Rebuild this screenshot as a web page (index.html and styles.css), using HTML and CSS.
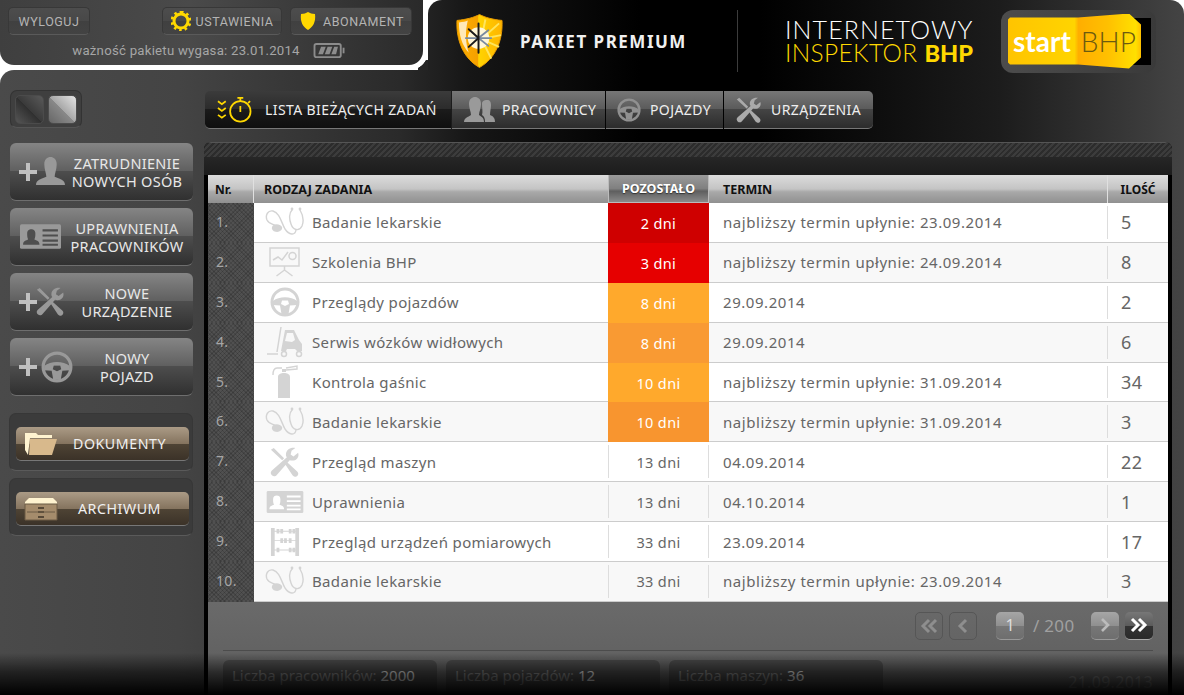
FILE: index.html
```html
<!DOCTYPE html>
<html lang="pl">
<head>
<meta charset="utf-8">
<title>Internetowy Inspektor BHP</title>
<link rel="stylesheet" href="styles.css">
</head>
<body>
<svg class="defs" xmlns="http://www.w3.org/2000/svg">
  <symbol id="i-steth" viewBox="0 0 40 30">
    <g fill="none" stroke="currentColor" stroke-width="1.4" stroke-linecap="round">
      <path d="M27 3C24 6 24 12 26 17C28 23 34 25 37 19C39 14 38 8 35 3"/>
      <path d="M31 23C30 29 24 28 20 22C16 15 15 6 8 4C3 3 0 8 2 13C4 17 8 17 11 19"/>
    </g>
    <circle cx="27" cy="2" r="1.4" fill="currentColor"/><circle cx="35" cy="2" r="1.4" fill="currentColor"/>
    <path d="M7 20a5 3.500 0 0 1 10 2a4 3 0 0 1-10-2z" fill="currentColor"/>
  </symbol>
  <symbol id="i-board" viewBox="0 0 40 30">
    <g fill="none" stroke="currentColor" stroke-width="1.5">
      <rect x="5" y="1" width="29" height="18"/>
      <path d="M8 13l5-3 4 3 6-8"/>
      <circle cx="27.500" cy="9" r="3.500"/>
      <path d="M19.500 19v4M19.500 23l-8 6M19.500 23l8 6"/>
    </g>
  </symbol>
  <symbol id="i-wheel" viewBox="0 0 30 30">
    <circle cx="15" cy="15" r="13" fill="none" stroke="currentColor" stroke-width="3"/>
    <path fill-rule="evenodd" fill="currentColor" d="M3 14C9 9 21 9 27 14L27 18L20 18.500L18.500 27L11.500 27L10 18.500L3 18ZM12 13.500L18 13.500L19 17L15 19L11 17Z"/>
  </symbol>
  <symbol id="i-fork" viewBox="0 0 38 32">
    <g fill="none" stroke="currentColor" stroke-width="1.5">
      <path d="M15 1L11 26M1 28H12"/>
      <circle cx="18" cy="28" r="2.500"/><circle cx="33" cy="28" r="2.500"/>
    </g>
    <path fill="currentColor" d="M19 4H28L33 14L36 18V25H31L29 23H21L20 25H15ZM21 7L19 15L26 16L29 14L27 7Z" fill-rule="evenodd"/>
  </symbol>
  <symbol id="i-ext" viewBox="0 0 30 34">
    <path fill="currentColor" d="M8 12C8 9 11 8 14 8C17 8 20 9 20 12V33H8ZM12 4H16V7H12Z"/>
    <path fill="none" stroke="currentColor" stroke-width="1.4" d="M12 3H7C4 3 3 6 3 10M16 3L27 1V4L16 5"/>
  </symbol>
  <symbol id="i-tools" viewBox="0 0 32 32">
    <path fill="currentColor" d="M30 6L25 10L22 8L23 4L27 1C22 0 17 3 17 8C17 9 17 10 18 11L2 25C0 27 1 29 2 30C4 32 6 31 7 30L21 14C26 16 32 12 30 6Z"/>
    <path fill="currentColor" d="M1 3L4 1L15 12L13 14ZM16 18L18 16L29 26C31 28 30 30 29 31C28 32 26 32 24 30Z"/>
  </symbol>
  <symbol id="i-card" viewBox="0 0 40 24">
    <rect width="40" height="24" rx="1.500" fill="currentColor"/>
    <path fill="var(--cut,#fff)" d="M3 20C3 16 6 16 8 15C7 13 7 11 7 9C7 6 9 5 11 5C13 5 15 6 15 9C15 11 15 13 14 15C16 16 19 16 19 20ZM22 5H37V7H22ZM22 10H37V12H22ZM22 15H37V17H22ZM22 19H37V21H22Z"/>
  </symbol>
  <symbol id="i-abacus" viewBox="0 0 32 32">
    <path fill="currentColor" d="M1 1H5V31H1ZM27 1H31V31H27ZM5 4H27V5H5ZM5 14H27V15H5ZM5 24H27V25H5Z"/>
    <path fill="currentColor" d="M7 2h3v5H7zM11 2h3v5h-3zM20 2h3v5h-3zM24 2h3v5h-3zM11 12h3v5h-3zM15 12h3v5h-3zM20 12h3v5h-3zM7 22h3v5H7zM20 22h3v5h-3zM24 22h3v5h-3z"/>
  </symbol>
  <symbol id="i-person" viewBox="0 0 28 28">
    <path fill="currentColor" d="M0 27C0 22 5 21 10 19C10 16 8 12 8 7C8 2 11 0 14 0C17 0 20 2 20 7C20 12 18 16 18 19C23 21 28 22 28 27Z"/>
  </symbol>
  <symbol id="i-people" viewBox="0 0 32 26">
    <path fill="currentColor" d="M0 25C0 21 4 20 7 18C7 15 5 11 5 7C5 2 8 0 11 0C14 0 17 2 17 7C17 11 15 15 15 18C18 20 20 21 20 25Z"/>
    <path fill="currentColor" d="M21 25C21 21 20 19 18 18C19 15 18 11 18 7C18 4 20 3 23 3C26 3 27 5 27 8C27 11 26 15 26 18C29 19 31 21 31 25Z"/>
  </symbol>
  <symbol id="i-plus" viewBox="0 0 18 18">
    <path fill="currentColor" d="M7 0H11V7H18V11H11V18H7V11H0V7H7Z"/>
  </symbol>
</svg>

<div class="app">
  <header class="top">
    <div class="account-wrap">
      <div class="account">
        <div class="account-row">
          <a class="chip">WYLOGUJ</a>
          <div class="chip-group">
            <a class="chip chip-wide">
              <svg class="chip-icon" viewBox="0 0 20 20"><circle cx="10" cy="10" r="7" fill="none" stroke="#ffd800" stroke-width="3"/><path fill="none" stroke="#ffd800" stroke-width="3" stroke-dasharray="2.500 2.980" d="M10 1a9 9 0 1 1 0 18a9 9 0 1 1 0-18"/></svg>
              USTAWIENIA
            </a>
            <a class="chip chip-wide">
              <svg class="chip-icon" viewBox="0 0 20 20"><path fill="#ffd800" d="M3 3C6 3 8 2 10 1C12 2 14 3 17 3C18 11 15 16 10 19C5 16 2 11 3 3Z"/></svg>
              ABONAMENT
            </a>
          </div>
        </div>
        <div class="expiry">
          <span>ważność pakietu wygasa: 23.01.2014</span>
          <svg class="battery" viewBox="0 0 34 16"><rect x="1" y="1" width="28" height="14" rx="2" fill="none" stroke="#8c8c8c" stroke-width="2"/><path d="M31 5h2v6h-2z" fill="#8c8c8c"/><path d="M5 12l3-8h5l-3 8zM12 12l3-8h5l-3 8zM19 12l3-8h4l-2 8z" fill="#8c8c8c"/></svg>
        </div>
      </div>
    </div>
    <div class="brand">
      <svg class="shield" viewBox="0 0 48 56">
        <defs>
          <linearGradient id="sg" x1="0" x2="1"><stop offset="0" stop-color="#ffb000"/><stop offset=".47" stop-color="#f5a000"/><stop offset=".48" stop-color="#ffd400"/><stop offset="1" stop-color="#ffb400"/></linearGradient>
        </defs>
        <path fill="url(#sg)" stroke="#e89c00" d="M1 7C11 6 18 4 24 1C30 4 37 6 47 7C48 28 40 46 24 55C8 46 0 28 1 7Z"/>
        <path fill="#ffe9b8" d="M3 9C7 8.500 10 8 12 7C9 20 10 30 13 40C6 32 3 22 3 9Z"/>
        <g stroke="#ffe55c" stroke-width="2"><path d="M26 26L44 10M26 26L46 22M26 26L44 34M26 26L36 46M26 26L30 6"/></g>
        <circle cx="23" cy="25" r="11" fill="#fff6d6"/>
        <g stroke="#7a8aa0" stroke-width="1.800" stroke-linecap="round"><path d="M23 25L33 17M23 25L36 25M23 25L33 33M23 25L10 25"/></g>
        <g stroke="#1a1a1a" stroke-width="2" stroke-linecap="round"><path d="M23 10V40M23 25L13 16M23 25L13 34"/></g>
      </svg>
      <div class="plan">PAKIET PREMIUM</div>
      <div class="brand-rule"></div>
      <div class="title">
        <div class="title-a">INTERNETOWY</div>
        <div class="title-b">INSPEKTOR <b>BHP</b></div>
      </div>
      <div class="logo">
        <div class="logo-key"><span class="logo-start">start</span><span class="logo-bhp">BHP</span></div>
      </div>
    </div>
  </header>

  <div class="main">
    <aside class="side">
      <div class="toggle"><span class="tg tg-dark"></span><span class="tg tg-light"></span></div>
      <a class="big">
        <span class="big-icon"><svg class="plus"><use href="#i-plus"/></svg><svg class="big-svg"><use href="#i-person"/></svg></span>
        <span class="big-label">ZATRUDNIENIE<br>NOWYCH OSÓB</span>
      </a>
      <a class="big">
        <span class="big-icon big-icon-card"><svg class="card-svg"><use href="#i-card"/></svg></span>
        <span class="big-label">UPRAWNIENIA<br>PRACOWNIKÓW</span>
      </a>
      <a class="big">
        <span class="big-icon"><svg class="plus"><use href="#i-plus"/></svg><svg class="big-svg"><use href="#i-tools"/></svg></span>
        <span class="big-label">NOWE<br>URZĄDZENIE</span>
      </a>
      <a class="big">
        <span class="big-icon"><svg class="plus"><use href="#i-plus"/></svg><svg class="big-svg big-wheel"><use href="#i-wheel"/></svg></span>
        <span class="big-label">NOWY<br>POJAZD</span>
      </a>
      <div class="well well-first">
        <a class="tan">
          <svg class="tan-icon" viewBox="0 0 34 24"><path fill="#fff3d0" d="M1 1H12L14 3H28V6H6L4 23L1 18Z"/><path fill="#d8b98c" d="M6 7H33L28 23H5Z"/></svg>
          <span class="tan-label">DOKUMENTY</span>
        </a>
      </div>
      <div class="well">
        <a class="tan">
          <svg class="tan-icon" viewBox="0 0 34 24"><path fill="#fff3d0" d="M5 1H29L33 5V7H1V5Z"/><path fill="#a58c6c" stroke="#6a5a44" d="M1 7H33V23H1Z"/><path stroke="#3c3226" stroke-width="1.500" d="M14 11h6M14 15h6M14 20h6"/><path stroke="#6a5a44" d="M3 15H31"/></svg>
          <span class="tan-label">ARCHIWUM</span>
        </a>
      </div>
    </aside>

    <section class="content">
      <nav class="tabs">
        <a class="tab tab-on">
          <svg class="tab-icon-on" viewBox="0 0 36 27"><g fill="none" stroke="#ffd800" stroke-width="1.800"><path d="M1 5l4 3 4-3M1 12l4 3 4-3M1 19l4 3 4-3"/><circle cx="24" cy="15.500" r="10.500"/><path d="M24 5V2M21 1.500h6M24 10v6M32 7l2-2"/></g></svg>
          <span>LISTA BIEŻĄCYCH ZADAŃ</span>
        </a>
        <a class="tab tab-p"><svg class="tab-people"><use href="#i-people"/></svg><span>PRACOWNICY</span></a>
        <a class="tab tab-v"><svg class="tab-wheel"><use href="#i-wheel"/></svg><span>POJAZDY</span></a>
        <a class="tab tab-u"><svg class="tab-tools"><use href="#i-tools"/></svg><span>URZĄDZENIA</span></a>
      </nav>

      <div class="panel">
        <div class="hatch"></div>
        <div class="panel-dark"></div>
        <div class="grid">
          <div class="row head">
            <div class="h h-nr">Nr.</div>
            <div class="h">RODZAJ ZADANIA</div>
            <div class="h h-left">POZOSTAŁO</div>
            <div class="h">TERMIN</div>
            <div class="h h-qty">ILOŚĆ</div>
          </div>

          <div class="row"><div class="nr">1.</div><div class="task"><span class="ico"><svg class="i40"><use href="#i-steth"/></svg></span>Badanie lekarskie</div><div class="days hot1">2 dni</div><div class="term">najbliższy termin upłynie: 23.09.2014</div><div class="qty">5</div></div>
          <div class="row alt"><div class="nr">2.</div><div class="task"><span class="ico"><svg class="i40"><use href="#i-board"/></svg></span>Szkolenia BHP</div><div class="days hot2">3 dni</div><div class="term">najbliższy termin upłynie: 24.09.2014</div><div class="qty">8</div></div>
          <div class="row"><div class="nr">3.</div><div class="task"><span class="ico"><svg class="i30"><use href="#i-wheel"/></svg></span>Przeglądy pojazdów</div><div class="days warm1">8 dni</div><div class="term">29.09.2014</div><div class="qty">2</div></div>
          <div class="row alt"><div class="nr">4.</div><div class="task"><span class="ico"><svg class="i-forklift"><use href="#i-fork"/></svg></span>Serwis wózków widłowych</div><div class="days warm2">8 dni</div><div class="term">29.09.2014</div><div class="qty">6</div></div>
          <div class="row"><div class="nr">5.</div><div class="task"><span class="ico"><svg class="i-exting"><use href="#i-ext"/></svg></span>Kontrola gaśnic</div><div class="days warm1">10 dni</div><div class="term">najbliższy termin upłynie: 31.09.2014</div><div class="qty">34</div></div>
          <div class="row alt"><div class="nr">6.</div><div class="task"><span class="ico"><svg class="i40"><use href="#i-steth"/></svg></span>Badanie lekarskie</div><div class="days warm3">10 dni</div><div class="term">najbliższy termin upłynie: 31.09.2014</div><div class="qty">3</div></div>
          <div class="row"><div class="nr">7.</div><div class="task"><span class="ico"><svg class="i30"><use href="#i-tools"/></svg></span>Przegląd maszyn</div><div class="days plain">13 dni</div><div class="term">04.09.2014</div><div class="qty">22</div></div>
          <div class="row alt"><div class="nr">8.</div><div class="task"><span class="ico"><svg class="i-idcard"><use href="#i-card"/></svg></span>Uprawnienia</div><div class="days plain">13 dni</div><div class="term">04.10.2014</div><div class="qty">1</div></div>
          <div class="row"><div class="nr">9.</div><div class="task"><span class="ico"><svg class="i30"><use href="#i-abacus"/></svg></span>Przegląd urządzeń pomiarowych</div><div class="days plain">33 dni</div><div class="term">23.09.2014</div><div class="qty">17</div></div>
          <div class="row alt"><div class="nr">10.</div><div class="task"><span class="ico"><svg class="i40"><use href="#i-steth"/></svg></span>Badanie lekarskie</div><div class="days plain">33 dni</div><div class="term">najbliższy termin upłynie: 23.09.2014</div><div class="qty">3</div></div>
        </div>

        <div class="foot">
          <div class="pager">
            <a class="pg pg-ghost"><svg class="chev" viewBox="0 0 20 16"><path d="M10 2L4 8l6 6M17 2l-6 6 6 6"/></svg></a>
            <a class="pg pg-ghost"><svg class="chev" viewBox="0 0 20 16"><path d="M13 2L7 8l6 6"/></svg></a>
            <a class="pg pg-gloss pg-num">1</a>
            <span class="pg-total">/ 200</span>
            <a class="pg pg-gloss"><svg class="chev" viewBox="0 0 20 16"><path d="M7 2l6 6-6 6"/></svg></a>
            <a class="pg pg-dark"><svg class="chev chev-w" viewBox="0 0 20 16"><path d="M3 2l6 6-6 6M10 2l6 6-6 6"/></svg></a>
          </div>
          <div class="foot-rule"></div>
          <div class="stats">
            <div class="stat">Liczba pracowników: <b>2000</b></div>
            <div class="stat">Liczba pojazdów: <b>12</b></div>
            <div class="stat">Liczba maszyn: <b>36</b></div>
            <div class="date">21.09.2013</div>
          </div>
        </div>
      </div>
    </section>
  </div>
  <div class="fade"></div>
</div>
</body>
</html>
```
FILE: styles.css
```css
* { box-sizing: border-box; }
html, body { margin: 0; padding: 0; background: #000; }
body { font-family: "Noto Sans", "Liberation Sans", sans-serif; overflow: hidden; }
a { display: block; color: inherit; text-decoration: none; }
.defs { display: none; }

.app { position: relative; width: 1184px; height: 695px; overflow: hidden; background: #fff; }

/* top strip */
.top { display: flex; height: 70px; }
.account-wrap { position: relative; width: 423px; height: 70px; flex: none; }
.account-wrap::after {
  content: ""; position: absolute; left: 418px; top: 60px; width: 10px; height: 10px;
  background: radial-gradient(circle at -8px -8px, transparent 17.500px, #262626 18px);
}
.account {
  width: 423px; height: 65px; padding: 7px 11px 0 8px;
  background: linear-gradient(90deg, #3f3f3f 0, #4a4a4a 45%, #2a2a2a 100%);
  border-radius: 0 0 14px 14px;
  font-family: Roboto, sans-serif;
}
.account-row { display: flex; justify-content: space-between; }
.chip-group { display: flex; gap: 8px; }
.chip {
  display: flex; align-items: center; justify-content: center; gap: 5px;
  width: 82px; height: 28px;
  border-radius: 5px;
  background: linear-gradient(180deg, #4d4d4d 0, #484848 50%, #404040 50%, #434343 100%);
  border: 1px solid #383838;
  border-bottom-color: #5a5a5a;
  color: #b4b4b4; font-size: 12.500px; letter-spacing: .55px;
}
.chip-wide { width: 120px; }
.chip-group .chip-wide + .chip-wide { width: 122px; }
.chip-icon { width: 20px; height: 20px; flex: none; }
.expiry { display: flex; align-items: center; justify-content: center; gap: 13px; margin-top: 7px; height: 16px; padding-right: 2px; color: #a6a6a6; font-size: 13.200px; letter-spacing: .25px; }
.battery { width: 33px; height: 15px; flex: none; }

.brand, .main {
  background: linear-gradient(90deg, #4a4a4a 0, #444 180px, #2a2a2a 400px, #161616 470px, #000 640px, #000 760px, #1c1c1c 1000px, #444 1184px) fixed;
}
.brand {
  position: relative; z-index: 1;
  flex: 1; margin-left: 5px; height: 70px;
  border-radius: 14px 14px 0 0;
  display: flex; align-items: center; padding: 12px 0 0 28px;
}
.shield { width: 47px; height: 56px; flex: none; margin-top: -1px; }
.plan { width: 217px; margin-left: 17px; color: #f0f0f0; font-weight: 700; font-size: 17px; letter-spacing: 1.500px; white-space: nowrap; }
.brand-rule { width: 1px; height: 62px; background: #3c3c3c; flex: none; }
.title { margin-left: 47px; width: 188px; font-family: Lato, sans-serif; font-weight: 300; font-size: 25px; line-height: 23px; letter-spacing: 1.100px; white-space: nowrap; }
.title-a { color: #fff; }
.title-b { color: #ffd800; font-size: 24.500px; letter-spacing: .35px; }
.title-b b { font-weight: 900; font-size: 23.500px; letter-spacing: 0; }
.logo {
  margin-left: 28px; width: 155px; height: 63px; border-radius: 12px; flex: none;
  background: linear-gradient(#000, #000) 130px 8px / 20px 47px no-repeat, linear-gradient(90deg, #4c4c4c, #3a3a3a);
  padding: 4px 0 0 7px;
}
.logo-key {
  display: flex; align-items: center; gap: 10px;
  width: 133px; height: 55px; padding-left: 5px;
  clip-path: polygon(0 6px, 2px 4px, 70px 4px, 121px 0, 133px 11px, 133px 44px, 121px 55px, 70px 51px, 2px 51px, 0 49px);
  background: linear-gradient(90deg, #ffc400 0, #ffd400 50%, #ffae00 53%, #ffc000 75%, #ffe000 96%, #ffc000 100%);
  font-family: Lato, sans-serif; font-size: 28px; line-height: 1;
}
.logo-start { color: #fff; font-weight: 700; }
.logo-bhp { color: #6b5a10; font-weight: 300; }

/* main */
.main { display: flex; height: 625px; border-radius: 14px 0 0 0; }
.side { width: 204px; flex: none; padding: 20px 0 0 10px; font-family: "Noto Sans", sans-serif; }
.toggle {
  display: flex; gap: 4px; width: 72px; height: 38px; padding: 4px;
  border-radius: 7px; border: 1px solid #333; border-bottom-color: #555;
  background: #3f3f3f;
}
.tg { width: 29px; height: 29px; border-radius: 5px; border: 1px solid #4b4b4b; }
.tg-dark { background: linear-gradient(45deg, #565656 0, #2e2e2e 50%, #3a3a3a 50%, #5a5a5a 100%); }
.tg-light { background: linear-gradient(45deg, #666 0, #8a8a8a 50%, #a8a8a8 50%, #e4e4e4 100%); }

.big {
  display: flex; align-items: center; width: 183px; height: 58px; margin-top: 7px;
  border-radius: 6px;
  background: linear-gradient(180deg, #858585 0, #5f5f5f 50%, #4d4d4d 50%, #303030 100%);
  border-bottom: 1px solid #6e6e6e;
  color: #e8e8e8;
}
.toggle + .big { margin-top: 15px; }
.big-icon { display: flex; align-items: center; width: 52px; flex: none; padding-left: 9px; color: #a8a8a8; }
.big-icon-card { padding-left: 10px; color: #999; --cut: #4e4e4e; }
.plus { width: 18px; height: 18px; flex: none; color: #c0c0c0; }
.big-svg { width: 29px; height: 29px; flex: none; margin-left: -1px; color: #999; }
.big-wheel { width: 32px; height: 32px; margin-left: 4px; }
.card-svg { width: 41px; height: 25px; flex: none; }
.big-label { flex: 1; text-align: center; font-size: 14.500px; line-height: 18px; letter-spacing: .3px; padding-right: 1px; white-space: nowrap; }

.well {
  width: 184px; height: 58px; margin: 7px 0 0 -1px; padding: 13px 0 0 6px;
  border-radius: 7px; border: 1px solid #373737; border-bottom-color: #5a5a5a;
  background: #3b3b3b;
}
.well-first { margin-top: 17px; }
.tan {
  display: flex; align-items: center; width: 173px; height: 34px; padding-left: 8px;
  border-radius: 5px;
  background: linear-gradient(180deg, #ab9b86 0, #85745f 50%, #4f4435 50%, #3b3228 100%);
  border-bottom: 1px solid #777;
  color: #f0f0f0;
}
.tan-icon { width: 34px; height: 24px; flex: none; }
.tan-label { flex: 1; text-align: center; font-size: 14.200px; letter-spacing: .55px; padding: 0 8px 1px 0; }

.content { flex: none; width: 968px; padding-top: 21px; }
.tabs { display: flex; gap: 1px; margin-left: 1px; }
.tab {
  display: flex; align-items: center; height: 38px;
  background: linear-gradient(180deg, #777 0, #5a5a5a 50%, #444 50%, #2c2c2c 100%);
  border-bottom: 1px solid #777;
  color: #eee; font-size: 14px; letter-spacing: .4px; white-space: nowrap;
}
.tab-on {
  width: 246px; padding-left: 12px; gap: 13px;
  border-radius: 5px 0 0 5px;
  background: linear-gradient(180deg, #3b3b3b 0, #2b2b2b 50%, #1b1b1b 50%, #0f0f0f 100%);
}
.tab-icon-on { width: 35px; height: 27px; flex: none; }
.tab-p { width: 153px; padding-left: 12px; gap: 6px; }
.tab-people { width: 32px; height: 26px; color: #9a9a9a; flex: none; }
.tab-v { width: 117px; padding-left: 11px; gap: 9px; }
.tab-wheel { width: 24px; height: 24px; color: #909090; flex: none; }
.tab-u { width: 149px; padding-left: 12px; gap: 9px; border-radius: 0 5px 5px 0; }
.tab-tools { width: 26px; height: 26px; color: #aaa; flex: none; }

.panel { margin-top: 13px; height: 553px; padding: 0 4px; background: #000; border-radius: 7px 7px 0 0; overflow: hidden; }
.hatch {
  height: 15px; margin: 0 -4px;
  border-top: 1px solid #555;
  background: repeating-linear-gradient(135deg, #3c3c3c 0, #3c3c3c 2px, #2c2c2c 2px, #2c2c2c 4px);
}
.panel-dark { height: 18px; margin: 0 -4px; background: linear-gradient(180deg, #262626, #1c1c1c); }

.grid { background: #fff; }
.row {
  display: grid; grid-template-columns: 46px 354px 101px 398px 61px;
  height: 39.900px; border-bottom: 1px solid #ccc; background: #fff;
  color: #666; font-size: 15px; letter-spacing: .35px;
}
.row.alt { background: #f8f8f8; }
.head {
  height: 28px; border-bottom: 0;
  background: linear-gradient(180deg, #dcdcdc 0, #c4c4c4 50%, #a9a9a9 60%, #909090 100%);
  color: #111; font-size: 12.500px; font-weight: 700; letter-spacing: 0;
  box-shadow: 0 1px 1px rgba(0,0,0,.25);
}
.h { display: flex; align-items: center; padding-left: 10px; }
.h-nr { padding-left: 7px; border-right: 1px solid #e0e0e0; font-size: 12px; }
.h-left {
  justify-content: center; padding-left: 0; color: #fff; text-shadow: 0 1px 1px #333;
  background: linear-gradient(180deg, #9a9a9a 0, #808080 50%, #5f5f5f 60%, #8a8a8a 100%);
  border: 1px solid #bbb; border-top: 0;
}
.term, .h-left + .h { padding-left: 14px; }
.h-qty { justify-content: center; padding-left: 0; border-left: 1px solid #e0e0e0; font-size: 12px; }

.nr {
  display: flex; align-items: center; padding: 0 0 3px 8px;
  margin-bottom: -1px;
  background-color: #505050;
  background-image: repeating-linear-gradient(45deg, rgba(0,0,0,.14) 0 1px, transparent 1px 3px), repeating-linear-gradient(-45deg, rgba(0,0,0,.14) 0 1px, transparent 1px 3px);
  color: #a6a6a6; font-size: 14px;
}
.task { display: flex; align-items: center; color: #666; }
.ico { display: flex; align-items: center; justify-content: center; width: 58px; height: 100%; padding-left: 3px; color: #d4d4d4; flex: none; --cut: #fff; }
.i40 { width: 40px; height: 30px; }
.i30 { width: 30px; height: 30px; }
.i-forklift { width: 38px; height: 32px; }
.i-exting { width: 30px; height: 34px; }
.i-idcard { width: 38px; height: 22px; }

.days { display: flex; align-items: center; justify-content: center; font-size: 14.500px; color: #fff; margin-bottom: -1px; }
.hot1 { background: #cf0000; }
.hot2 { background: #e60000; }
.warm1 { background: #ffa92c; }
.warm2 { background: #f99a33; }
.warm3 { background: #f8952f; }
.days.plain { color: #666; margin: 3px 0; border-left: 1px solid #ddd; border-right: 1px solid #ddd; }
.term { display: flex; align-items: center; font-size: 15px; letter-spacing: .55px; }
.qty { display: flex; align-items: center; padding-left: 13px; margin: 3px 0; border-left: 1px solid #ddd; font-size: 18px; }

.foot { height: 93px; padding: 10px 15px 0; background: linear-gradient(180deg, #6a6a6a, #5c5c5c); }
.pager { display: flex; align-items: center; justify-content: flex-end; gap: 6px; height: 28px; }
.pg {
  display: flex; align-items: center; justify-content: center;
  width: 28px; height: 28px; border-radius: 5px;
}
.pg-ghost { border: 1px solid #565656; }
.pg-ghost .chev { stroke: #8e8e8e; stroke-width: 3; }
.pg-gloss { background: linear-gradient(180deg, #a6a6a6 0, #909090 50%, #777 50%, #6e6e6e 100%); border-bottom: 1px solid #999; color: #ddd; font-size: 16px; }
.pg-num { margin-left: 13px; }
.pg-total { width: 55px; padding-left: 3px; color: #a0a0a0; font-size: 17px; letter-spacing: .3px; white-space: nowrap; }
.pg-dark { background: linear-gradient(180deg, #777 0, #5c5c5c 50%, #333 50%, #2a2a2a 100%); border-bottom: 1px solid #aaa; }
.chev { width: 20px; height: 16px; fill: none; stroke: #bbb; stroke-width: 2.600; }
.chev-w { stroke: #fff; stroke-width: 3; }
.foot-rule { height: 1px; margin-top: 10px; background: #4c4c4c; }
.stats { display: flex; gap: 9px; margin-top: 9px; }
.stat {
  width: 214px; height: 40px; padding: 5px 0 0 9px; border-radius: 6px;
  background: #4a4a4a; color: #8a8a8a; font-size: 15px; white-space: nowrap;
}
.stat b { color: #e8e8e8; font-weight: 400; }
.date { margin: 13px 0 0 auto; color: #808080; font-size: 16px; line-height: 18px; letter-spacing: .3px; }

.fade { position: absolute; z-index: 2; left: 0; right: 0; bottom: 0; height: 42px; pointer-events: none; background: linear-gradient(180deg, rgba(0,0,0,0) 0, rgba(0,0,0,.55) 45%, rgba(0,0,0,1) 100%); }
```
